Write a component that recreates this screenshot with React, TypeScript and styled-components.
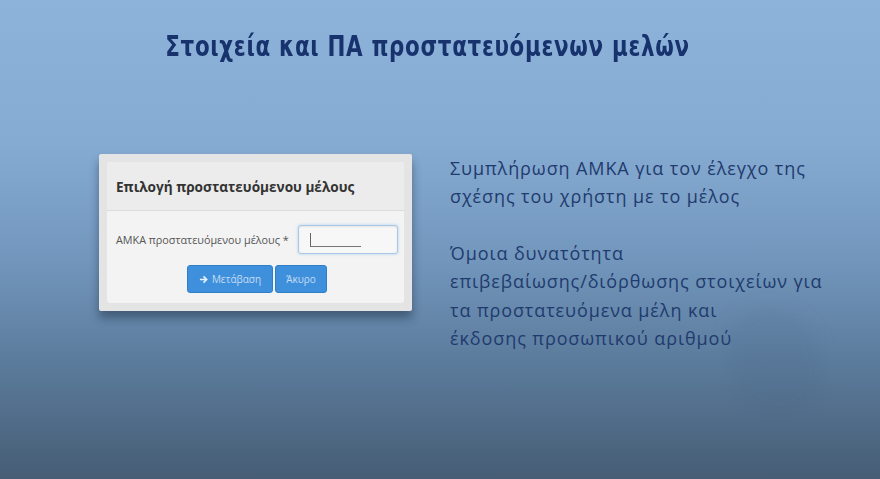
import styled, { createGlobalStyle } from "styled-components";

const GlobalStyle = createGlobalStyle`
  html, body {
    margin: 0;
    padding: 0;
  }
  body {
    font-family: "Open Sans", "Noto Sans", sans-serif;
  }
`;

const Slide = styled.div`
  position: relative;
  width: 880px;
  height: 479px;
  overflow: hidden;
  display: flex;
  flex-direction: column;
  background: linear-gradient(
    180deg,
    #8db3da 0%,
    #86abd2 30%,
    #7195bb 55%,
    #5c7c9d 75%,
    #465d75 100%
  );
`;

const Title = styled.h1`
  margin: 30px 0 0;
  padding-right: 25px;
  text-align: center;
  font-family: "DejaVu Sans Condensed", "DejaVu Sans", sans-serif;
  font-weight: 700;
  font-size: 28px;
  line-height: 34px;
  letter-spacing: 0.8px;
  color: #17326d;
`;

/* the slide font is much narrower than anything installed */
const TitleText = styled.span`
  display: inline-block;
  transform: scaleX(0.85);
`;

const Content = styled.div`
  display: flex;
  align-items: flex-start;
  gap: 38px;
  margin-top: 90px;
  padding-left: 99px;
`;

const Card = styled.div`
  width: 313px;
  box-sizing: border-box;
  padding: 8px;
  background: #e4e4e4;
  border-radius: 2px;
  box-shadow: 0 7px 10px rgba(20, 35, 55, 0.45);
`;

const Panel = styled.div`
  background: #f3f3f3;
  border-radius: 3px;
  overflow: hidden;
`;

const PanelHeader = styled.div`
  height: 48px;
  display: flex;
  align-items: center;
  padding-left: 9px;
  background: #ececec;
  border-bottom: 1px solid #dcdcdc;
  font-size: 13.6px;
  font-weight: 700;
  color: #333;
`;

const PanelBody = styled.div`
  display: flex;
  flex-direction: column;
  align-items: center;
  padding: 14px 6px 10px 9px;
  gap: 11px;
`;

const FieldRow = styled.div`
  align-self: stretch;
  display: flex;
  align-items: center;
  justify-content: space-between;
`;

const Label = styled.span`
  font-size: 10.8px;
  color: #555;
`;

const Input = styled.div`
  position: relative;
  width: 100px;
  height: 29px;
  box-sizing: border-box;
  border: 1px solid #a9c8e6;
  border-radius: 3px;
  background: #f7f7f7;
  box-shadow: inset 0 1px 2px rgba(0, 0, 0, 0.08), 0 0 3px rgba(102, 175, 233, 0.5);

  &::after {
    content: "";
    position: absolute;
    left: 11px;
    top: 7px;
    width: 50px;
    height: 13px;
    border-left: 1px solid #666;
    border-bottom: 1px solid #777;
  }
`;

const Buttons = styled.div`
  display: flex;
  gap: 2px;
`;

const Button = styled.button<{ $wide?: boolean }>`
  height: 28px;
  width: ${(p) => (p.$wide ? "86px" : "52px")};
  border: 1px solid #2f7fc8;
  border-radius: 3px;
  background: #3f90dc;
  color: #c4dcf3;
  font-family: "Open Sans", sans-serif;
  font-size: 10px;
  display: flex;
  align-items: center;
  justify-content: center;
  gap: 4px;
  padding: 0;
`;

const Notes = styled.div`
  display: flex;
  flex-direction: column;
  gap: 28px;
  font-family: "Open Sans", "Noto Sans", sans-serif;
  font-size: 18px;
  line-height: 28.4px;
  letter-spacing: 0.9px;
  color: #1f3b6e;
`;

const Note = styled.p`
  margin: 0;
`;

const Ghost = styled.div`
  position: absolute;
  left: 728px;
  top: 305px;
  width: 95px;
  height: 115px;
  border-radius: 45% 50% 50% 45%;
  background: rgba(60, 85, 115, 0.1);
  filter: blur(9px);
  transform: rotate(-20deg);
`;

const Arrow = () => (
  <svg width="9" height="9" viewBox="0 0 10 10" fill="none">
    <path d="M1 5h7M5 1.5L8.5 5 5 8.5" stroke="#e8f1fb" strokeWidth="1.8" />
  </svg>
);

export default function App() {
  return (
    <Slide>
      <GlobalStyle />
      <Ghost />
      <Title>
        <TitleText>Στοιχεία και ΠΑ προστατευόμενων μελών</TitleText>
      </Title>
      <Content>
        <Card>
          <Panel>
            <PanelHeader>Επιλογή προστατευόμενου μέλους</PanelHeader>
            <PanelBody>
              <FieldRow>
                <Label>ΑΜΚΑ προστατευόμενου μέλους *</Label>
                <Input />
              </FieldRow>
              <Buttons>
                <Button $wide>
                  <Arrow />
                  Μετάβαση
                </Button>
                <Button>Άκυρο</Button>
              </Buttons>
            </PanelBody>
          </Panel>
        </Card>
        <Notes>
          <Note>
            Συμπλήρωση ΑΜΚΑ για τον έλεγχο της
            <br />
            σχέσης του χρήστη με το μέλος
          </Note>
          <Note>
            Όμοια δυνατότητα
            <br />
            επιβεβαίωσης/διόρθωσης στοιχείων για
            <br />
            τα προστατευόμενα μέλη και
            <br />
            έκδοσης προσωπικού αριθμού
          </Note>
        </Notes>
      </Content>
    </Slide>
  );
}
